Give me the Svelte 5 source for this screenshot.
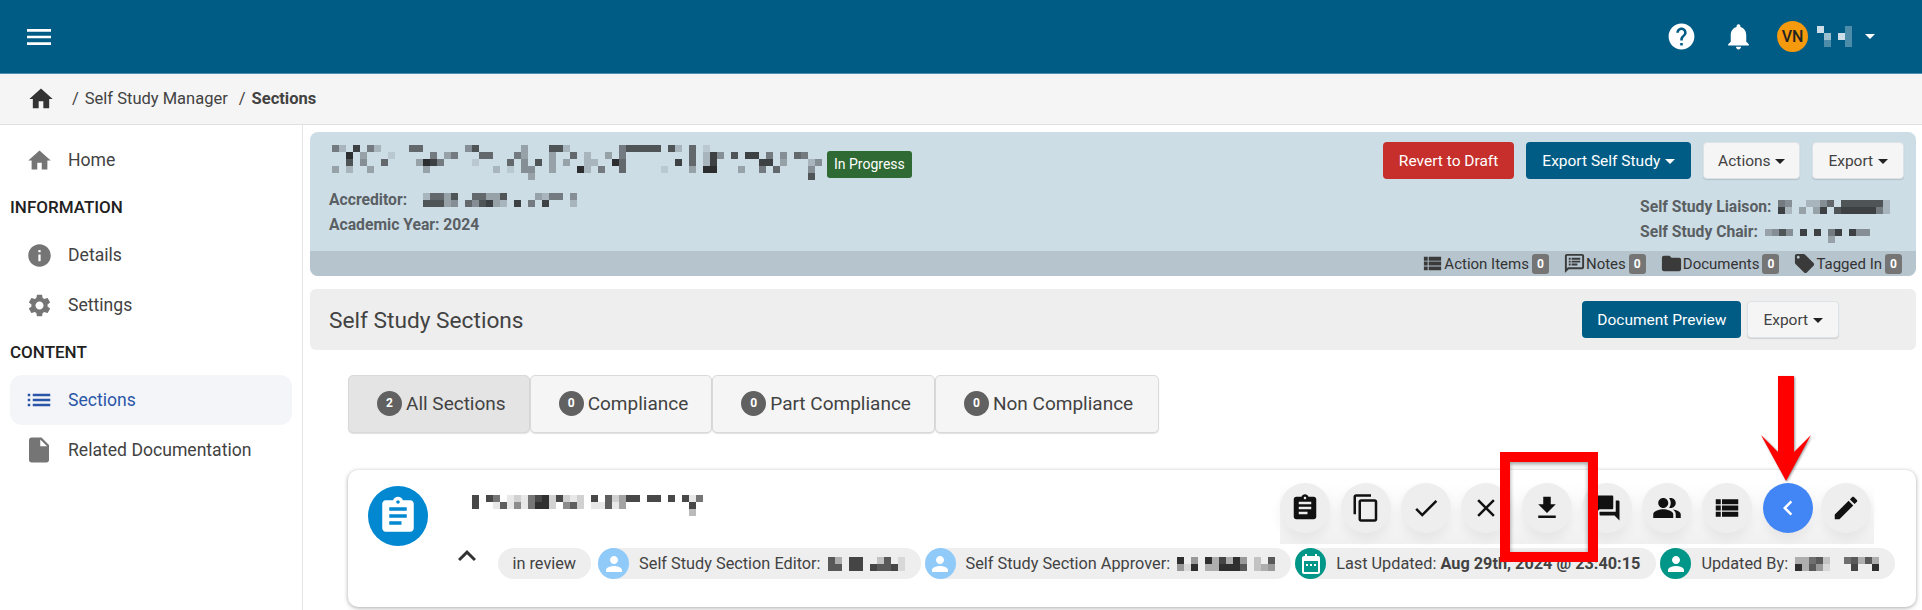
<script lang="ts">
	const icons: Record<string, string> = {
		menu: 'M3 18h18v-2H3v2zm0-5h18v-2H3v2zm0-7v2h18V6H3z',
		home: 'M10 20v-6h4v6h5v-8h3L12 3 2 12h3v8z',
		info: 'M12 2C6.48 2 2 6.48 2 12s4.48 10 10 10 10-4.48 10-10S17.52 2 12 2zm1 15h-2v-6h2v6zm0-8h-2V7h2v2z',
		settings:
			'M19.14 12.94c.04-.3.06-.61.06-.94 0-.32-.02-.64-.07-.94l2.03-1.58c.18-.14.23-.41.12-.61l-1.92-3.32c-.12-.22-.37-.29-.59-.22l-2.39.96c-.5-.38-1.03-.7-1.62-.94l-.36-2.54c-.04-.24-.24-.41-.48-.41h-3.84c-.24 0-.43.17-.47.41l-.36 2.54c-.59.24-1.13.57-1.62.94l-2.39-.96c-.22-.08-.47 0-.59.22L2.74 8.87c-.12.21-.08.47.12.61l2.03 1.58c-.05.3-.09.63-.09.94s.02.64.07.94l-2.03 1.58c-.18.14-.23.41-.12.61l1.92 3.32c.12.22.37.29.59.22l2.39-.96c.5.38 1.03.7 1.62.94l.36 2.54c.05.24.24.41.48.41h3.84c.24 0 .44-.17.47-.41l.36-2.54c.59-.24 1.13-.56 1.62-.94l2.39.96c.22.08.47 0 .59-.22l1.92-3.32c.12-.22.07-.47-.12-.61l-2.01-1.58zM12 15.6c-1.98 0-3.6-1.62-3.6-3.6s1.62-3.6 3.6-3.6 3.6 1.62 3.6 3.6-1.62 3.6-3.6 3.6z',
		list: 'M3 13h2v-2H3v2zm0 4h2v-2H3v2zm0-8h2V7H3v2zm4 4h14v-2H7v2zm0 4h14v-2H7v2zM7 7v2h14V7H7z',
		file: 'M6 2c-1.1 0-1.99.9-1.99 2L4 20c0 1.1.89 2 1.99 2H18c1.1 0 2-.9 2-2V8l-6-6H6zm7 7V3.5L18.5 9H13z',
		clipboard:
			'M19 3h-4.18C14.4 1.84 13.3 1 12 1c-1.3 0-2.4.84-2.82 2H5c-1.1 0-2 .9-2 2v14c0 1.1.9 2 2 2h14c1.1 0 2-.9 2-2V5c0-1.1-.9-2-2-2zm-7 0c.55 0 1 .45 1 1s-.45 1-1 1-1-.45-1-1 .45-1 1-1zm2 14H7v-2h7v2zm3-4H7v-2h10v2zm0-4H7V7h10v2z',
		copy: 'M16 1H4c-1.1 0-2 .9-2 2v14h2V3h12V1zm3 4H8c-1.1 0-2 .9-2 2v14c0 1.1.9 2 2 2h11c1.1 0 2-.9 2-2V7c0-1.1-.9-2-2-2zm0 16H8V7h11v14z',
		check: 'M9 16.17L4.83 12l-1.42 1.41L9 19 21 7l-1.41-1.41z',
		close: 'M19 6.41L17.59 5 12 10.59 6.41 5 5 6.41 10.59 12 5 17.59 6.41 19 12 13.41 17.59 19 19 17.59 13.41 12z',
		download: 'M19 9h-4V3H9v6H5l7 7 7-7zM5 18v2h14v-2H5z',
		forum: 'M21 6h-2v9H6v2c0 .55.45 1 1 1h11l4 4V7c0-.55-.45-1-1-1zm-4 6V3c0-.55-.45-1-1-1H3c-.55 0-1 .45-1 1v14l4-4h10c.55 0 1-.45 1-1z',
		people:
			'M16.67 13.13C18.04 14.06 19 15.32 19 17v3h4v-3c0-2.18-3.57-3.47-6.33-3.87zM15 12c2.21 0 4-1.79 4-4s-1.79-4-4-4c-.47 0-.91.1-1.33.24C14.5 5.27 15 6.58 15 8s-.5 2.73-1.33 3.76c.42.14.86.24 1.33.24zM9 12c2.21 0 4-1.79 4-4s-1.79-4-4-4-4 1.79-4 4 1.79 4 4 4zM9 13c-2.67 0-8 1.34-8 4v3h16v-3c0-2.66-5.33-4-8-4z',
		viewList: 'M3 14h4v-4H3v4zm0 5h4v-4H3v4zM3 9h4V5H3v4zm5 5h13v-4H8v4zm0 5h13v-4H8v4zM8 5v4h13V5H8z',
		chevron: 'M15.41 7.41L14 6l-6 6 6 6 1.41-1.41L10.83 12z',
		edit: 'M3 17.25V21h3.75L17.81 9.94l-3.75-3.75L3 17.25zM20.71 7.04c.39-.39.39-1.02 0-1.41l-2.34-2.34c-.39-.39-1.02-.39-1.41 0l-1.83 1.83 3.75 3.75 1.83-1.83z',
		up: 'M12 8l-6 6 1.41 1.41L12 10.83l4.59 4.58L18 14z',
		help: 'M12 2C6.48 2 2 6.48 2 12s4.48 10 10 10 10-4.48 10-10S17.52 2 12 2zm1 17h-2v-2h2v2zm2.07-7.75l-.9.92C13.45 12.9 13 13.5 13 15h-2v-.5c0-1.1.45-2.1 1.17-2.83l1.24-1.26c.37-.36.59-.86.59-1.41 0-1.1-.9-2-2-2s-2 .9-2 2H8c0-2.21 1.79-4 4-4s4 1.79 4 4c0 .88-.36 1.68-.93 2.25z',
		bell: 'M12 22c1.1 0 2-.9 2-2h-4c0 1.1.89 2 2 2zm6-6v-5c0-3.07-1.64-5.64-4.5-6.32V4c0-.83-.67-1.5-1.5-1.5s-1.5.67-1.5 1.5v.68C7.63 5.36 6 7.92 6 11v5l-2 2v1h16v-1l-2-2z',
		person: 'M12 12c2.21 0 4-1.79 4-4s-1.79-4-4-4-4 1.79-4 4 1.79 4 4 4zm0 2c-2.67 0-8 1.34-8 4v2h16v-2c0-2.66-5.33-4-8-4z',
		calendar:
			'M19 4h-1V2h-2v2H8V2H6v2H5c-1.1 0-2 .9-2 2v14c0 1.1.9 2 2 2h14c1.1 0 2-.9 2-2V6c0-1.1-.9-2-2-2zm0 16H5V9h14v11zM7 12h2v2H7zm4 0h2v2h-2zm4 0h2v2h-2z',
		fold: 'M10 4H4c-1.1 0-1.99.9-1.99 2L2 18c0 1.1.9 2 2 2h16c1.1 0 2-.9 2-2V8c0-1.1-.9-2-2-2h-8l-2-2z',
		tag: 'M21.41 11.58l-9-9C12.05 2.22 11.55 2 11 2H4c-1.1 0-2 .9-2 2v7c0 .55.22 1.05.59 1.42l9 9c.36.36.86.58 1.41.58s1.05-.22 1.41-.59l7-7c.37-.36.59-.86.59-1.41s-.23-1.06-.59-1.42zM5.5 7C4.67 7 4 6.33 4 5.5S4.67 4 5.5 4 7 4.67 7 5.5 6.33 7 5.5 7z',
		note: 'M20 2H4c-1.1 0-2 .9-2 2v18l4-4h14c1.1 0 2-.9 2-2V4c0-1.1-.9-2-2-2zm0 14H5.17L4 17.17V4h16v12zM6 6h2v2H6zm0 3h2v2H6zm0 3h2v2H6zm3-6h9v2H9zm0 3h9v2H9zm0 3h6v2H9z'
	};

	// redacted names: each row is "column:darkness", one cell is 7px
	const titleCells = [
		'0:5 1:2 3:8 5:5 6:2 11:6 12:6 19:4 20:7 27:3 31:7 32:7 33:2 41:5 42:7 43:7 44:7 45:7 46:7 48:7 49:2 51:6 53:1',
		'2:9 4:3 8:1 14:5 16:3 17:5 21:6 22:6 26:5 27:3 31:3 34:6 36:2 39:3 41:5 51:6 53:2 54:8 55:4 57:7 59:8 60:8 62:5 64:4 66:6 67:5',
		'2:7 4:4 7:6 12:3 13:9 14:8 15:5 20:1 25:6 27:4 29:7 31:3 33:3 36:2 37:2 40:9 41:6 49:8 51:6 53:2 54:8 61:8 62:8 64:3 68:2 69:4',
		'0:3 2:2 5:3 13:3 23:2 25:1 27:4 28:4 31:3 35:9 36:2 38:5 41:6 47:1 51:3 53:9 54:9 58:3 61:5 63:6 68:4',
		'28:3 68:7'
	];
	const accreditorCells = [
		'0:2 1:6 2:6 3:3 4:7 7:6 8:6 9:3 10:3 11:7 16:3 17:2 18:5 19:5 21:4',
		'0:7 1:7 2:7 3:3 4:4 6:6 7:4 8:7 9:8 10:3 11:2 13:8 15:5 17:8 21:2'
	];
	const liaisonCells = [
		'0:5 1:4 4:2 5:2 6:4 7:6 9:7 10:7 11:7 12:7 13:7 14:7 15:2',
		'0:8 1:2 3:3 5:3 6:8 8:7 9:8 10:8 11:8 12:8 13:8 14:5 15:2'
	];
	const chairCells = ['0:3 1:4 2:7 3:4 5:8 7:8 9:5 10:8 12:8 13:4 14:4', '9:3'];
	const sectionCells = [
		'0:8 2:8 3:6 5:1 6:2 7:1 8:6 9:8 10:9 11:2 12:8 13:2 14:1 15:2 17:8 19:7 20:2 21:4 22:8 23:8 25:8 26:8 28:8 30:8 31:1 32:6',
		'0:8 3:1 4:7 5:1 6:5 7:1 8:6 9:9 10:9 11:2 13:5 14:7 15:2 17:1 18:1 19:7 20:1 21:4 31:8',
		'31:3'
	];
	const userCells = ['0:8 4:3', '1:6 3:8 4:3', '1:3 4:3'];
	const editorCells = ['0:7 1:3 3:8 4:8 7:2 8:7 10:1', '0:7 1:7 3:8 4:8 6:8 7:7 8:7 9:8 10:1'];
	const approverCells = ['0:9 2:4 4:9 5:3 6:8 7:3 8:9 9:4 11:2 13:7', '0:4 1:1 2:9 4:3 5:3 6:9 7:9 8:9 9:7 11:2 12:3 13:4'];
	const updatedCells = ['0:3 1:3 2:6 3:7 4:2 7:6 8:7 9:3 10:7 11:3', '0:9 1:3 2:7 3:4 4:1 8:8 11:9'];

	function parseRow(row: string) {
		return row.split(' ').map((p) => p.split(':').map(Number));
	}
	function colCount(rows: string[]) {
		return Math.max(...rows.flatMap((r) => parseRow(r).map((c) => c[0]))) + 1;
	}

	const tabs = [
		{ n: 2, label: 'All Sections', active: true },
		{ n: 0, label: 'Compliance', active: false },
		{ n: 0, label: 'Part Compliance', active: false },
		{ n: 0, label: 'Non Compliance', active: false }
	];
	const actions = ['clipboard', 'copy', 'check', 'close', 'download', 'forum', 'people', 'viewList', 'chevron', 'edit'];
	const counters = [
		{ icon: 'viewList', label: 'Action Items' },
		{ icon: 'note', label: 'Notes' },
		{ icon: 'fold', label: 'Documents' },
		{ icon: 'tag', label: 'Tagged In' }
	];
</script>

{#snippet icon(name: string, cls: string = '')}
	<svg class="icon {cls}" viewBox="0 0 24 24" aria-hidden="true"><path d={icons[name]} /></svg>
{/snippet}

{#snippet mosaic(rows: string[], cls: string = '')}
	<svg class="mosaic {cls}" width={colCount(rows) * 7} height={rows.length * 7} aria-hidden="true">
		{#each rows as row, y}
			{#each parseRow(row) as c}
				<rect x={c[0] * 7} y={y * 7} width="7" height="7" fill-opacity={c[1] / 10} />
			{/each}
		{/each}
	</svg>
{/snippet}

<div class="page">
	<header class="topbar">
		<button class="burger">{@render icon('menu')}</button>
		<div class="top-right">
			{@render icon('help', 'help')}
			{@render icon('bell', 'bell')}
			<span class="avatar">VN</span>
			{@render mosaic(userCells, 'user')}
			<span class="caret white"></span>
		</div>
	</header>

	<nav class="crumbs">
		{@render icon('home', 'crumb-home')}
		<span class="sep">/</span>
		<span>Self Study Manager</span>
		<span class="sep second">/</span>
		<b>Sections</b>
	</nav>

	<div class="body">
		<aside class="sidebar">
			<a class="nav-item">{@render icon('home')}Home</a>
			<h4>INFORMATION</h4>
			<a class="nav-item">{@render icon('info')}Details</a>
			<a class="nav-item">{@render icon('settings')}Settings</a>
			<h4>CONTENT</h4>
			<a class="nav-item current">{@render icon('list', 'big')}Sections</a>
			<a class="nav-item">{@render icon('file', 'big')}Related Documentation</a>
		</aside>

		<main class="main">
			<section class="hero">
				<div class="hero-top">
					<div class="hero-left">
						<div class="title-row">
							{@render mosaic(titleCells)}
							<span class="status">In Progress</span>
						</div>
						<div class="meta first">Accreditor: {@render mosaic(accreditorCells, 'inline acc')}</div>
						<div class="meta">Academic Year: 2024</div>
					</div>
					<div class="hero-right">
						<div class="btns">
							<button class="btn red">Revert to Draft</button>
							<button class="btn blue">Export Self Study <span class="caret white"></span></button>
							<button class="btn plain tight">Actions <span class="caret"></span></button>
							<button class="btn plain">Export <span class="caret"></span></button>
						</div>
						<div class="people">
							<div class="meta">Self Study Liaison: {@render mosaic(liaisonCells, 'inline')}</div>
							<div class="meta">Self Study Chair: {@render mosaic(chairCells, 'inline chair')}</div>
						</div>
					</div>
				</div>
				<div class="counters">
					{#each counters as c}
						<span class="counter">{@render icon(c.icon)}{c.label}<em>0</em></span>
					{/each}
				</div>
			</section>

			<section class="sections-head">
				<h2>Self Study Sections</h2>
				<div class="head-btns">
					<button class="btn blue tight">Document Preview</button>
					<button class="btn plain">Export <span class="caret"></span></button>
				</div>
			</section>

			<div class="tabs">
				{#each tabs as t}
					<button class="tab" class:active={t.active}><span class="num">{t.n}</span>{t.label}</button>
				{/each}
			</div>

			<article class="card">
				<span class="card-icon">{@render icon('clipboard')}</span>
				<div class="card-main">
					<div class="card-top">
						{@render mosaic(sectionCells, 'section-name')}
						<div class="strip">
							{#each actions as a}
								<span class="round" class:primary={a === 'chevron'}>{@render icon(a)}</span>
							{/each}
						</div>
					</div>
					<div class="chips">
						{@render icon('up', 'collapse')}
						<span class="chip bare">in review</span>
						<span class="chip">
							<span class="chip-av light">{@render icon('person')}</span>Self Study Section Editor: {@render mosaic(editorCells, 'inline')}
						</span>
						<span class="chip">
							<span class="chip-av light">{@render icon('person')}</span>Self Study Section Approver: {@render mosaic(approverCells, 'inline')}
						</span>
						<span class="chip">
							<span class="chip-av teal">{@render icon('calendar')}</span>Last Updated:&nbsp;<b>Aug 29th, 2024 @ 23:40:15</b>
						</span>
						<span class="chip">
							<span class="chip-av teal">{@render icon('person')}</span>Updated By: {@render mosaic(updatedCells, 'inline')}
						</span>
					</div>
				</div>
			</article>
		</main>
	</div>

	<!-- annotations drawn over the screenshot -->
	<div class="mark-box"></div>
	<svg class="mark-arrow" width="54" height="108" viewBox="0 0 54 108" aria-hidden="true">
		<path d="M19 0h16v76l17-17-25 46L2 59l17 17z" />
	</svg>
</div>

<style>
	:global(body) {
		margin: 0;
		background: #fff;
	}
	.page {
		position: relative;
		width: 1922px;
		height: 610px;
		overflow: hidden;
		font-family: Roboto, 'Liberation Sans', sans-serif;
		color: #424242;
		display: flex;
		flex-direction: column;
	}
	.icon {
		width: 24px;
		height: 24px;
		fill: currentColor;
		flex: none;
		display: block;
	}
	.mosaic {
		flex: none;
		fill: #1a1a1a;
		shape-rendering: crispEdges;
	}
	.mosaic.inline {
		display: inline-block;
		vertical-align: middle;
	}
	button {
		font: inherit;
		cursor: pointer;
	}

	.topbar {
		height: 73px;
		flex: none;
		background: #005c85;
		border-bottom: 1px solid #4d8fb0;
		display: flex;
		align-items: center;
		justify-content: space-between;
		padding: 0 47px 0 23px;
		color: #fff;
	}
	.burger {
		background: none;
		border: 0;
		padding: 0;
		color: #fff;
		width: 32px;
		height: 32px;
	}
	.burger .icon {
		width: 32px;
		height: 32px;
	}
	.top-right {
		display: flex;
		align-items: center;
	}
	.top-right .help {
		width: 31px;
		height: 31px;
	}
	.top-right .bell {
		width: 31px;
		height: 31px;
		margin-left: 26px;
	}
	.avatar {
		width: 31px;
		height: 31px;
		border-radius: 50%;
		background: #f5990d;
		color: #222;
		font-size: 16px;
		font-weight: 500;
		display: flex;
		align-items: center;
		justify-content: center;
		margin-left: 23px;
	}
	.mosaic.user {
		fill: #fff;
		margin-left: 9px;
	}
	.caret {
		display: inline-block;
		width: 0;
		height: 0;
		border-left: 5px solid transparent;
		border-right: 5px solid transparent;
		border-top: 5px solid #222;
		vertical-align: middle;
		margin-left: 1px;
	}
	.caret.white {
		border-top-color: #fff;
	}
	.top-right .caret {
		margin-left: 13px;
	}

	.crumbs {
		height: 49px;
		padding-bottom: 1px;
		flex: none;
		background: #f5f5f5;
		border-bottom: 1px solid #e0e0e0;
		display: flex;
		align-items: center;
		padding-left: 27px;
		font-size: 16.5px;
		color: #424242;
	}
	.crumb-home {
		width: 28px;
		height: 28px;
		color: #333;
	}
	.crumbs .sep {
		margin: 0 6px 0 17px;
	}
	.crumbs .sep.second {
		margin-left: 11px;
	}

	.body {
		flex: 1;
		display: flex;
		min-height: 0;
	}
	.sidebar {
		flex: none;
		border-right: 1px solid #e4e4e4;
		padding: 10px 10px 0;
		box-sizing: border-box;
		width: 303px;
	}
	.nav-item {
		display: flex;
		align-items: center;
		gap: 15.5px;
		height: 50px;
		padding-left: 15.5px;
		font-size: 17.6px;
		color: #424242;
		border-radius: 12px;
	}
	.nav-item .icon {
		color: #757575;
		width: 27px;
		height: 27px;
	}
	.nav-item .icon.big {
		width: 30px;
		height: 30px;
		margin: 0 -1.5px;
	}
	.nav-item.current {
		background: #f4f5f8;
		color: #2a56a8;
	}
	.nav-item.current .icon {
		color: #2a56a8;
	}
	.sidebar h4 {
		margin: 0;
		height: 45px;
		line-height: 45px;
		font-size: 17px;
		font-weight: 500;
		color: #212121;
	}

	.main {
		flex: 1;
		min-width: 0;
		padding: 7px 6px 0 7px;
		display: flex;
		flex-direction: column;
	}
	.hero {
		background: #ccdde6;
		border-radius: 8px;
		overflow: hidden;
		flex: none;
	}
	.hero-top {
		height: 119px;
		display: flex;
		justify-content: space-between;
		padding: 0 12px 0 19px;
	}
	.hero-left {
		padding-top: 13px;
	}
	.title-row {
		display: flex;
		align-items: center;
		height: 35px;
		padding-left: 3px;
		gap: 5px;
	}
	.status {
		background: #2f6a35;
		color: #fff;
		font-size: 14px;
		height: 27px;
		line-height: 27px;
		padding: 0 7px;
		border-radius: 3px;
		margin-top: 3px;
	}
	.meta {
		font-size: 15.7px;
		font-weight: 700;
		color: #5a5f63;
		line-height: 25px;
		white-space: nowrap;
	}
	.meta .mosaic {
		position: relative;
		top: -1px;
		margin-left: 3px;
	}
	.meta .mosaic.chair {
		top: 3px;
	}
	.meta.first {
		margin-top: 7px;
	}
	.meta .mosaic.acc {
		margin-left: 12px;
	}
	.hero-right {
		padding-top: 10px;
		display: flex;
		flex-direction: column;
		align-items: flex-end;
	}
	.btns {
		display: flex;
		gap: 12px;
	}
	.btn {
		height: 37px;
		padding: 0 15px;
		font-size: 15.5px;
		border-radius: 4px;
		border: 1px solid transparent;
		white-space: nowrap;
		box-sizing: border-box;
	}
	.btn.tight {
		padding: 0 14px;
	}
	.btn.red {
		background: #c62f2b;
		color: #fff;
	}
	.btn.blue {
		background: #005c85;
		color: #fff;
	}
	.btn.plain {
		background: #f5f5f5;
		border-color: #dde2e6;
		color: #424242;
		box-shadow: 0 1px 1px rgba(0, 0, 0, 0.12);
	}
	.people {
		width: 264px;
		margin-top: 15px;
	}

	.counters {
		height: 25px;
		background: #b6c4ce;
		display: flex;
		justify-content: flex-end;
		padding-right: 14px;
		gap: 14px;
		align-items: center;
	}
	.counter {
		display: flex;
		align-items: center;
		font-size: 15px;
		color: #333;
	}
	.counter .icon {
		width: 23px;
		height: 23px;
		color: #3a3a3a;
	}
	.counter em {
		font-style: normal;
		background: #757575;
		color: #fff;
		font-size: 12px;
		font-weight: 700;
		width: 17px;
		height: 20px;
		line-height: 20px;
		border-radius: 3px;
		text-align: center;
		margin-left: 3px;
	}

	.sections-head {
		margin-top: 13px;
		height: 61px;
		flex: none;
		background: #eee;
		border-radius: 6px;
		display: flex;
		align-items: center;
		justify-content: space-between;
		padding: 0 77px 0 19px;
	}
	.sections-head h2 {
		margin: 2px 0 0;
		font-size: 22.7px;
		font-weight: 400;
		color: #424242;
	}
	.head-btns {
		display: flex;
		gap: 6px;
	}

	.tabs {
		margin: 25px 0 0 38px;
		display: flex;
		flex: none;
	}
	.tab {
		height: 58px;
		padding: 0 23px 2px 28px;
		background: #f5f5f5;
		border: 1px solid #d9d9d9;
		border-radius: 5px;
		font-size: 19px;
		color: #424242;
		display: flex;
		align-items: center;
		gap: 4px;
		box-shadow: 0 1px 1px rgba(0, 0, 0, 0.12);
	}
	.tab:last-child {
		padding-right: 25px;
	}
	.tab.active {
		background: #e4e4e4;
	}
	.num {
		width: 25px;
		height: 25px;
		border-radius: 50%;
		background: #616161;
		color: #fff;
		font-size: 12px;
		font-weight: 700;
		display: flex;
		align-items: center;
		justify-content: center;
	}

	.card {
		margin: 37px 0 0 38px;
		height: 137px;
		flex: none;
		box-sizing: border-box;
		background: #fff;
		border-radius: 10px;
		box-shadow: 0 1px 4px rgba(0, 0, 0, 0.35);
		padding: 13px 0 0 20px;
		display: flex;
	}
	.card-icon {
		width: 60px;
		height: 60px;
		border-radius: 50%;
		background: #0288d1;
		color: #fff;
		flex: none;
		margin-top: 3px;
		display: flex;
		align-items: center;
		justify-content: center;
	}
	.card-icon .icon {
		width: 42px;
		height: 42px;
	}
	.card-main {
		flex: 1;
		min-width: 0;
	}
	.card-top {
		height: 61px;
		display: flex;
		justify-content: space-between;
		padding: 0 42px 0 44px;
	}
	.section-name {
		margin-top: 12px;
	}
	.strip {
		height: 61px;
		display: flex;
		gap: 10.3px;
		padding-right: 3px;
		background: linear-gradient(#fff, #f0f0f0);
	}
	.round {
		width: 50px;
		height: 50px;
		border-radius: 50%;
		background: #eee;
		color: #111;
		display: flex;
		align-items: center;
		justify-content: center;
		box-shadow: 0 6px 12px rgba(0, 0, 0, 0.06);
	}
	.round .icon {
		width: 30px;
		height: 30px;
	}
	.round:last-child {
		margin-left: -2px;
	}
	.round.primary {
		background: #4285f4;
		color: #fff;
	}
	.chips {
		margin-top: 4px;
		display: flex;
		align-items: center;
		font-size: 16.3px;
		color: #424242;
		white-space: nowrap;
	}
	.collapse {
		width: 36px;
		height: 36px;
		color: #333;
		margin: -16px 12.5px 0 21px;
	}
	.chip {
		display: flex;
		align-items: center;
		height: 31px;
		background: #eee;
		border-radius: 16px;
		padding-right: 16px;
		margin-right: 4px;
	}
	.chip.bare {
		padding: 0 15px;
		margin-right: 7px;
	}
	.chip b {
		font-weight: 700;
		font-size: 16.3px;
	}
	.chip .mosaic {
		margin-left: 7px;
	}
	.chip-av {
		width: 31px;
		height: 31px;
		border-radius: 50%;
		margin-right: 10px;
		display: flex;
		align-items: center;
		justify-content: center;
		color: #fff;
	}
	.chip-av .icon {
		width: 24px;
		height: 24px;
	}
	.chip-av.light {
		background: #90caf9;
	}
	.chip-av.teal {
		background: #009688;
	}

	.mark-box {
		position: absolute;
		left: 1500px;
		top: 452px;
		width: 98px;
		height: 110px;
		box-sizing: border-box;
		border: 10px solid #f00;
		box-shadow: inset 0 2px 4px rgba(0, 0, 0, 0.4);
	}
	.mark-arrow {
		position: absolute;
		left: 1759px;
		top: 376px;
		fill: #f00;
		filter: drop-shadow(1px 1px 1px rgba(0, 0, 0, 0.4));
	}
</style>
